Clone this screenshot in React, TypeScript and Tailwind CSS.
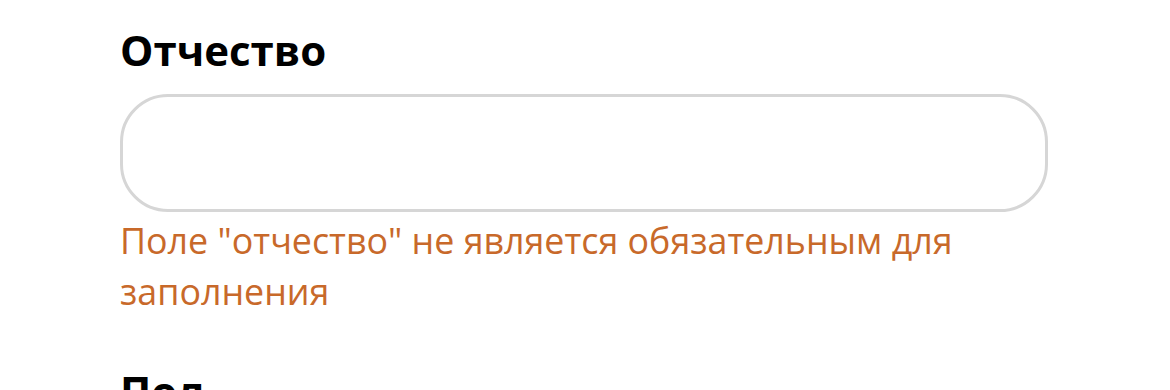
export default function App() {
  return (
    <div className="h-[390px] w-[1170px] overflow-hidden bg-white font-['Open_Sans',sans-serif]">
      <div className="w-[928px] ml-[120px] pt-[22px]">
        <label className="block text-[42px] font-bold leading-[56px] text-black">Отчество</label>
        <input
          type="text"
          className="mt-[16px] block h-[118px] w-full rounded-[48px] border-[3px] border-[#d6d6d6] bg-white px-8 text-[36px] outline-none"
        />
        <p className="mt-[3px] text-[35.8px] leading-[51px] text-[#c8692a]">
          Поле "отчество" не является обязательным для заполнения
        </p>
        <label className="mt-[46px] block text-[42px] font-bold leading-[56px] text-black">Пол</label>
      </div>
    </div>
  );
}
